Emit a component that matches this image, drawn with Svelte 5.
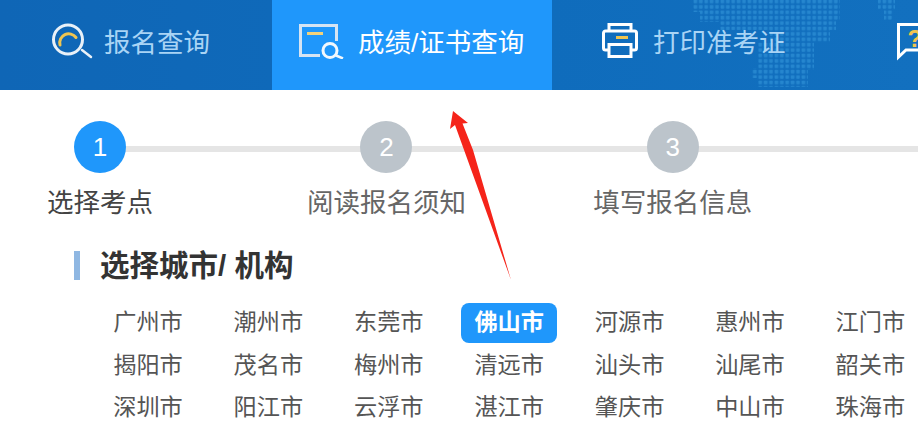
<script>
  const tabs = [
    { id: 'search', label: '报名查询' },
    { id: 'score', label: '成绩/证书查询', active: true },
    { id: 'print', label: '打印准考证' },
    { id: 'help', label: '' }
  ];
  const steps = ['选择考点', '阅读报名须知', '填写报名信息'];
  const cities = [
    '广州市', '潮州市', '东莞市', '佛山市', '河源市', '惠州市', '江门市',
    '揭阳市', '茂名市', '梅州市', '清远市', '汕头市', '汕尾市', '韶关市',
    '深圳市', '阳江市', '云浮市', '湛江市', '肇庆市', '中山市', '珠海市'
  ];
</script>

<div class="page">
  <nav class="nav">
    <svg class="map" width="238" height="90" viewBox="680 0 238 90">
      <defs>
        <pattern id="dots" x="693" y="-1" width="5.4" height="5.4" patternUnits="userSpaceOnUse">
          <rect x="0.6" y="0.6" width="3.6" height="3.6" rx="0.8" fill="#3a9ee0" fill-opacity="0.5" />
        </pattern>
      </defs>
      <path d="M693 0H840V20H836V30H830V42H814V70H808V87H758V78H752V68H758V42H770V30H720V22H700V12H693Z" fill="url(#dots)" />
      <path d="M878 0H895V10H893V20H884V10H878Z" fill="url(#dots)" />
    </svg>
    {#each tabs as tab}
      <div class="tab {tab.id}" class:active={tab.active}>
        {#if tab.id === 'search'}
          <svg class="icon" width="42" height="42" viewBox="0 0 42 42" fill="none">
            <circle cx="17" cy="20.500" r="14.500" stroke="#e9f1f8" stroke-width="3" />
            <path d="M31 31l9 7" stroke="#e9f1f8" stroke-width="2.500" stroke-linecap="round" />
            <path d="M9 26a9 9 0 0 1 16-7.500" stroke="#f0c550" stroke-width="3" stroke-linecap="round" />
          </svg>
        {:else if tab.id === 'score'}
          <svg class="icon" width="48" height="38" viewBox="0 0 48 38" fill="none">
            <path d="M21 34.500H1.500V4.500H37.500V20" stroke="#d5e4f3" stroke-width="3" />
            <path d="M8 12.500H24" stroke="#f3d27a" stroke-width="3" />
            <circle cx="31" cy="29.500" r="7" stroke="#f2f8fd" stroke-width="3" />
            <path d="M37 34.500l7 3" stroke="#f2f8fd" stroke-width="2.500" />
          </svg>
        {:else if tab.id === 'print'}
          <svg class="icon" width="36" height="36" viewBox="0 0 36 36" fill="none">
            <path d="M7 9V2.500H29V9" stroke="#fff" stroke-width="3" />
            <path d="M6 28H3.500A2 2 0 0 1 1.500 26V11A2 2 0 0 1 3.500 9H32.500A2 2 0 0 1 34.500 11V26A2 2 0 0 1 32.500 28H30" stroke="#fff" stroke-width="3" />
            <path d="M7 22.500H29V34.500H7Z" stroke="#fff" stroke-width="3" />
            <path d="M14 15.500H26" stroke="#f0c550" stroke-width="3" />
          </svg>
        {:else}
          <svg class="icon" width="40" height="48" viewBox="0 0 40 48" fill="none">
            <path d="M38 34H9L1.500 41V8.500H38Z" stroke="#fff" stroke-width="3" />
            <text x="10.500" y="31" class="qmark">?</text>
          </svg>
        {/if}
        {#if tab.label}<span>{tab.label}</span>{/if}
      </div>
    {/each}
  </nav>

  <ol class="steps">
    {#each steps as step, i}
      <li class="step" class:current={i === 0}>
        <span class="num">{i + 1}</span>
        <span class="step-label">{step}</span>
      </li>
    {/each}
  </ol>

  <h2 class="title">选择城市/ 机构</h2>

  <div class="cities">
    {#each cities as city}
      <span class="city" class:selected={city === '佛山市'}>{city}</span>
    {/each}
  </div>

  <svg class="arrow" width="70" height="180" viewBox="445 105 70 180">
    <path d="M453 111L468 123L462.500 123.500L473 150L511 280L455 125L450 129Z" fill="#f5241a" />
  </svg>
</div>

<style>
  :global(body) {
    margin: 0;
    background: #fff;
  }
  .page {
    position: relative;
    width: 918px;
    height: 430px;
    overflow: hidden;
    font-family: "Liberation Sans", "Noto Sans CJK SC", sans-serif;
    background: #fff;
  }

  /* Nav */
  .nav {
    position: relative;
    display: flex;
    height: 90px;
    background: linear-gradient(90deg, #0f66b6 0%, #0f6cbc 60%, #1270bf 100%);
  }
  .map {
    position: absolute;
    left: 680px;
    top: 0;
  }
  .tab {
    position: relative;
    flex: 0 0 280px;
    display: flex;
    align-items: center;
    box-sizing: border-box;
    height: 90px;
    padding-bottom: 10px;
    font-size: 26.500px;
    color: #a9d4f5;
  }
  .tab.search {
    flex-basis: 272px;
    padding-left: 51px;
    gap: 11px;
  }
  .tab.score {
    padding-left: 27px;
    gap: 11px;
    color: #fff;
    background: #1f97fb;
  }
  .tab.print {
    padding-left: 50px;
    gap: 15px;
  }
  .tab.help {
    padding-left: 65px;
  }
  .icon {
    flex-shrink: 0;
  }
  .qmark {
    font-size: 24px;
    font-weight: 700;
    fill: #f0c550;
  }

  /* Steps */
  .steps {
    display: flex;
    list-style: none;
    margin: 0 0 0 -43.200px;
    padding: 31px 0 0 0;
  }
  .step {
    position: relative;
    flex: 0 0 286.400px;
    display: flex;
    flex-direction: column;
    align-items: center;
  }
  .step::after {
    content: "";
    position: absolute;
    left: 50%;
    top: 25px;
    width: 100%;
    height: 6px;
    background: #e5e5e5;
  }
  .num {
    position: relative;
    z-index: 1;
    width: 52px;
    height: 52px;
    border-radius: 50%;
    background: #bcc4cb;
    color: #fff;
    font-size: 26px;
    line-height: 52px;
    text-align: center;
  }
  .current .num {
    background: #1f97fb;
  }
  .step-label {
    margin-top: 12px;
    font-size: 26.500px;
    line-height: 36px;
    color: #666;
    white-space: nowrap;
  }
  .current .step-label {
    color: #444;
  }

  /* Cities */
  .title {
    margin: 30px 0 0 74px;
    padding-left: 20px;
    height: 29px;
    border-left: 6px solid #8fb7e2;
    font-size: 29.500px;
    line-height: 29px;
    font-weight: 700;
    color: #333;
  }
  .cities {
    display: grid;
    grid-template-columns: repeat(7, 96px);
    column-gap: 24.400px;
    row-gap: 3px;
    margin: 23px 0 0 100px;
  }
  .city {
    height: 39.500px;
    line-height: 39px;
    text-align: center;
    font-size: 23.200px;
    color: #555;
    white-space: nowrap;
  }
  .city.selected {
    border-radius: 8px;
    background: #1f97fb;
    color: #fff;
    font-weight: 700;
  }

  /* Annotation drawn over the page */
  .arrow {
    position: absolute;
    left: 445px;
    top: 105px;
  }
</style>
